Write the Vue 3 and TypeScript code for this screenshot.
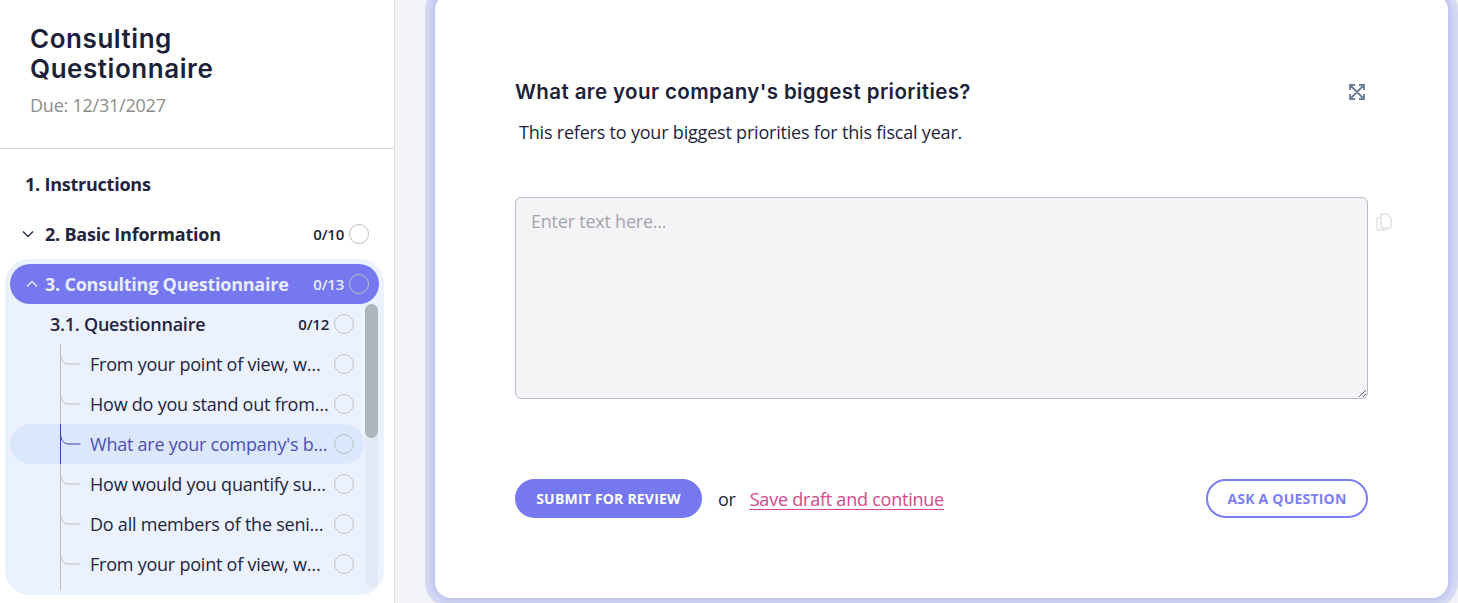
<script setup lang="ts">
interface Question { text: string; active?: boolean }
const questions: Question[] = [
  { text: 'From your point of view, what makes your company unique?' },
  { text: 'How do you stand out from your competitors?' },
  { text: "What are your company's biggest priorities?", active: true },
  { text: 'How would you quantify success this year?' },
  { text: 'Do all members of the senior team agree?' },
  { text: 'From your point of view, what are the main risks?' },
]
</script>

<template>
  <div class="page">
    <aside class="sidebar">
      <header class="head">
        <h1 class="title">Consulting Questionnaire</h1>
        <p class="due">Due: 12/31/2027</p>
      </header>
      <nav class="nav">
        <div class="row first"><span class="sec-name">1. Instructions</span></div>
        <div class="row second">
          <svg class="chev" viewBox="0 0 12 8" width="12" height="8"><path d="M1 1.500 6 6.500l5-5" fill="none" stroke="#2a2f45" stroke-width="1.400" /></svg>
          <span class="sec-name">2. Basic Information</span>
          <span class="count">0/10</span>
          <span class="circle"></span>
        </div>
        <section class="panel">
          <div class="row current">
            <svg class="chev" viewBox="0 0 12 8" width="12" height="8"><path d="M1 6.500 6 1.500l5 5" fill="none" stroke="#fff" stroke-opacity=".85" stroke-width="1.400" /></svg>
            <span class="sec-name">3. Consulting Questionnaire</span>
            <span class="count">0/13</span>
            <span class="circle"></span>
          </div>
          <div class="scroller">
            <div class="list">
              <div class="sub">
                <span class="sub-name">3.1. Questionnaire</span>
                <span class="count">0/12</span>
                <span class="circle"></span>
              </div>
              <div class="tree">
                <div v-for="(q, i) in questions" :key="i" class="item" :class="{ active: q.active }">
                  <svg class="branch" viewBox="0 0 21 40" width="21" height="40">
                    <path d="M.5 0V40M.5 11C1.500 17 4 20 9 20H20.500" fill="none" stroke="currentColor" />
                  </svg>
                  <span class="label">{{ q.text }}</span>
                  <span class="circle"></span>
                </div>
                <div class="tree-end"></div>
              </div>
            </div>
            <div class="track"><div class="thumb"></div></div>
          </div>
        </section>
      </nav>
    </aside>
    <main class="main">
      <article class="card">
        <div class="q-head">
          <h2 class="q-title">What are your company's biggest priorities?</h2>
          <svg class="expand" viewBox="0 0 16 16" width="16" height="16">
            <path d="M1 6V1h5M10 1h5v5M15 10v5h-5M6 15H1v-5M1.500 1.500l13 13M14.500 1.500l-13 13" fill="none" stroke="#6b7c93" stroke-width="1.800" />
          </svg>
        </div>
        <p class="q-desc">This refers to your biggest priorities for this fiscal year.</p>
        <div class="answer">
          <textarea class="input" placeholder="Enter text here..."></textarea>
          <svg class="copy" viewBox="0 0 16 18" width="16" height="18">
            <path d="M5 13V3a2 2 0 0 1 2-2h4l4 4v8a2 2 0 0 1-2 2H7a2 2 0 0 1-2-2ZM5 4.500H3a2 2 0 0 0-2 2V15a2 2 0 0 0 2 2h6a2 2 0 0 0 2-2v-.500" fill="none" stroke="#e1e2e4" stroke-width="1.500" />
          </svg>
        </div>
        <div class="actions">
          <button class="btn primary" type="button">Submit for review</button>
          <span class="or">or</span>
          <a class="save" href="#">Save draft and continue</a>
          <button class="btn ghost" type="button">Ask a question</button>
        </div>
      </article>
    </main>
  </div>
</template>

<style>
html, body { margin: 0; overflow: hidden; }
</style>

<style scoped>
* { box-sizing: border-box; }
.page {
  display: flex;
  width: 1458px;
  height: 603px;
  overflow: hidden;
  font-family: "Open Sans", sans-serif;
  font-size: 18px;
  letter-spacing: -.23px;
  color: #1f2440;
  background: #f4f4f8;
}
.sidebar {
  width: 395px;
  flex: none;
  background: #fff;
  border-right: 1px solid #dcdcdc;
}
.head {
  height: 149px;
  padding: 24px 30px 0;
  border-bottom: 1px solid #d9d9d9;
}
.title {
  margin: 0;
  width: 220px;
  font-family: Inter, sans-serif;
  font-size: 26px;
  line-height: 30px;
  font-weight: 600;
  letter-spacing: .55px;
  color: #1c2139;
}
.due {
  margin: 9px 0 0;
  font-size: 18px;
  line-height: 24px;
  color: #8c8c8c;
}
.nav { padding: 15px 0 0 5px; }
.row {
  display: flex;
  align-items: center;
  height: 40px;
}
.first { padding-left: 20px; }
.second {
  width: 379px;
  margin-top: 10px;
  margin-bottom: 5px;
  padding: 0 15px 0 17px;
}
.second .chev { margin-right: 11px; }
.chev { flex: none; }
.sec-name { font-weight: 700; white-space: nowrap; }
.count {
  margin-left: auto;
  margin-right: 5px;
  font-size: 15px;
  font-weight: 600;
}
.circle {
  flex: none;
  width: 20px;
  height: 20px;
  border: 1px solid #bfbfbf;
  border-radius: 50%;
}
.panel {
  width: 379px;
  height: 336px;
  padding: 5px;
  border-radius: 24px;
  background: #ebf2fd;
}
.current {
  width: 369px;
  padding: 0 10px 0 16px;
  border-radius: 20px;
  background: #7578ee;
  color: #e9ecfb;
}
.current .chev { margin-right: 7px; }
.scroller { display: flex; height: 286px; overflow: hidden; }
.list { width: 354px; flex: none; }
.sub {
  display: flex;
  align-items: center;
  height: 40px;
  padding: 0 10px 0 40px;
}
.sub-name { font-weight: 600; }
.tree { display: flex; flex-direction: column; }
.item {
  display: flex;
  align-items: center;
  height: 40px;
  padding: 0 10px 0 50px;
  color: #bdbdbd;
  border-radius: 20px;
}
.branch { flex: none; margin-right: 9px; }
.label {
  width: 240px;
  color: #1f2440;
  white-space: nowrap;
  overflow: hidden;
  text-overflow: ellipsis;
}
.item.active { background: #dbe7fb; color: #3b3fb5; }
.item.active .label { color: #4e4fb3; }
.item .circle { margin-left: auto; }
.tree-end { width: 1px; height: 6px; margin-left: 50px; background: #bdbdbd; }
.track {
  width: 13px;
  height: 284px;
  margin-left: 1px;
  border-radius: 7px;
  background: #e3eaf5;
}
.thumb {
  height: 134px;
  border-radius: 7px;
  background: #adb5bd;
}
.main {
  flex: 1;
  min-width: 0;
  padding: 0 10px 0 40px;
}
.card {
  display: flex;
  flex-direction: column;
  height: 604px;
  margin-top: -6px;
  padding: 85px 80px 0;
  background: #fff;
  border-radius: 16px;
  box-shadow: 0 0 6px 3px #bcc0ec, 0 0 0 10px #d6d9f3;
}
.q-head {
  display: flex;
  align-items: center;
  justify-content: space-between;
  padding-right: 3px;
}
.q-title {
  margin: 0;
  font-family: Inter, sans-serif;
  font-size: 20.5px;
  line-height: 26px;
  font-weight: 600;
  letter-spacing: .4px;
  color: #1c2139;
}
.q-desc { margin: 15px 0 0 4px; line-height: 24px; letter-spacing: -.2px; }
.answer { position: relative; margin-top: 53px; height: 202px; }
.input {
  display: block;
  width: 100%;
  height: 202px;
  padding: 11px 15px;
  border: 1px solid #b4bccb;
  border-radius: 6px;
  background: #f4f4f7;
  font: 18px/24px "Open Sans", sans-serif;
  letter-spacing: -.23px;
  resize: vertical;
  outline: none;
}
.input::placeholder { color: #a3a5ad; opacity: 1; }
.copy { position: absolute; left: 100%; top: 16px; margin-left: 8px; }
.actions { display: flex; align-items: center; margin-top: 80px; }
.btn {
  height: 39px;
  border-radius: 20px;
  font: 700 14px "Open Sans", sans-serif;
  text-transform: uppercase;
  letter-spacing: .2px;
  cursor: pointer;
}
.primary { width: 187px; border: none; background: #7578ee; color: #fff; }
.or { margin: 0 14px 0 16px; }
.save { color: #d6488c; text-decoration: underline; text-underline-offset: 3px; }
.ghost {
  width: 162px;
  margin-left: auto;
  border: 2px solid #7b7ef5;
  background: #fff;
  color: #7b7ef5;
}
</style>
